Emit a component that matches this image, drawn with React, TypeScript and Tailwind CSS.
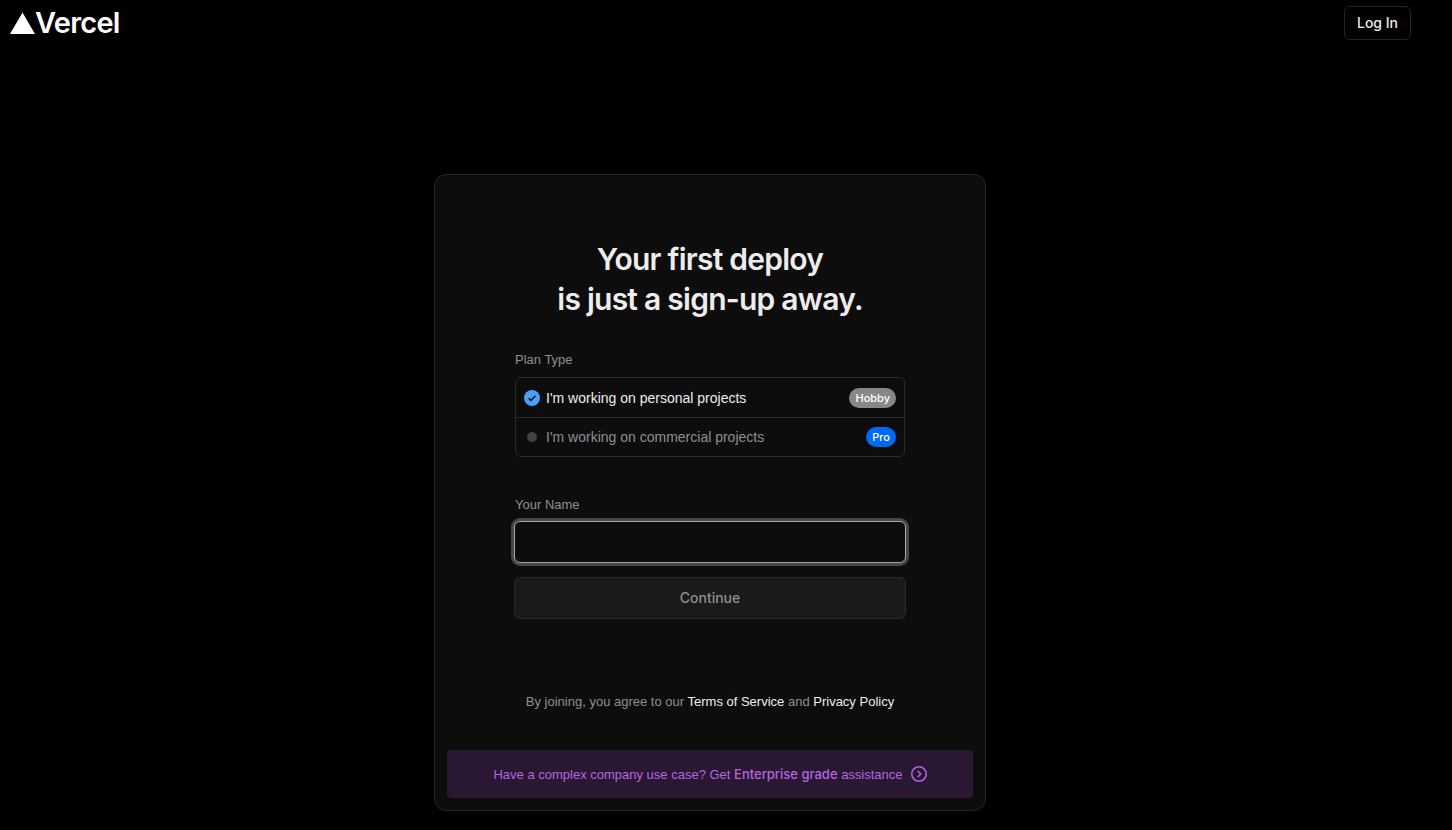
import { useState } from "react";

type PlanId = "hobby" | "pro";

interface Plan {
  id: PlanId;
  label: string;
  badge: string;
  badgeClass: string;
}

const PLANS: Plan[] = [
  { id: "hobby", label: "I'm working on personal projects", badge: "Hobby", badgeClass: "bg-[#878787]" },
  { id: "pro", label: "I'm working on commercial projects", badge: "Pro", badgeClass: "bg-[#006af5]" },
];

export default function App() {
  const [plan, setPlan] = useState<PlanId>("hobby");
  const [name, setName] = useState("");

  return (
    <div className="min-h-screen bg-black pr-8 pb-5 font-['Liberation_Sans',Arial,sans-serif] text-[#ededed]">
      <header className="flex items-start justify-between pt-1.5 pr-[9px] pl-2.5">
        <a href="/" className="flex h-[34px] items-center text-white">
          <svg className="h-[22px] w-[25px]" viewBox="0 0 25 22" fill="currentColor" aria-hidden="true">
            <path d="M12.5 0.5 25 22H0Z" />
          </svg>
          <span className="font-['Inter',sans-serif] text-[29px] leading-8 font-semibold tracking-tight">Vercel</span>
        </a>
        <button
          type="button"
          className="h-[34px] rounded-md border border-[#242424] px-3 font-['Inter',sans-serif] text-sm font-medium"
        >
          Log In
        </button>
      </header>

      <main className="mx-auto mt-[134px] max-w-[552px] rounded-xl border border-[#242424] bg-[#0d0d0d] p-3">
        <div className="mx-auto max-w-[392px] pt-[52px]">
          <h1 className="text-center font-['Inter',sans-serif] text-[30px] leading-10 font-semibold tracking-tight">
            Your first deploy
            <br />
            is just a sign-up away.
          </h1>

          <form onSubmit={(e) => e.preventDefault()}>
            <fieldset className="mt-[31px] px-px">
              <legend className="text-[13px] leading-5 text-[#8f8f8f]">Plan Type</legend>
              <div className="mt-[7px] divide-y divide-[#2a2a2a] rounded-md border border-[#2a2a2a]">
                {PLANS.map((p) => (
                  <PlanOption key={p.id} plan={p} checked={plan === p.id} onSelect={() => setPlan(p.id)} />
                ))}
              </div>
            </fieldset>

            <label htmlFor="name" className="mt-[38px] block px-px text-[13px] leading-5 text-[#8f8f8f]">
              Your Name
            </label>
            <input
              id="name"
              type="text"
              value={name}
              onChange={(e) => setName(e.target.value)}
              className="mt-[6px] block h-[42px] w-full rounded-md border border-[#a8a8a8] bg-[#0d0d0d] px-3 text-base ring-3 ring-[#474747] outline-none"
            />
            <button
              type="submit"
              disabled={!name.trim()}
              className="mt-[14px] h-[42px] w-full rounded-md border border-[#2a2a2a] bg-[#1a1a1a] font-['Inter',sans-serif] text-sm font-medium text-[#8f8f8f]"
            >
              Continue
            </button>
          </form>
        </div>

        <p className="mt-[73px] text-center text-[13px] leading-5 text-[#8f8f8f]">
          By joining, you agree to our{" "}
          <a href="/legal/terms" className="text-[#ededed]">Terms of Service</a> and{" "}
          <a href="/legal/privacy-policy" className="text-[#ededed]">Privacy Policy</a>
        </p>

        <a
          href="/contact/sales"
          className="mt-[38px] flex h-12 items-center justify-center gap-2 rounded bg-[#2a1731] text-[13px] leading-5 text-[#b366e0]"
        >
          <span>
            Have a complex company use case? Get <strong className="font-['Inter',sans-serif] font-medium">Enterprise grade</strong> assistance
          </span>
          <svg className="size-4" viewBox="0 0 16 16" fill="none" stroke="currentColor" strokeWidth="1.5" aria-hidden="true">
            <circle cx="8" cy="8" r="7.25" />
            <path d="m6.75 5 3 3-3 3" />
          </svg>
        </a>
      </main>
    </div>
  );
}

function PlanOption({
  plan,
  checked,
  onSelect,
}: {
  plan: Plan;
  checked: boolean;
  onSelect: () => void;
}) {
  return (
    <label
      className={`relative flex h-[38px] cursor-pointer items-center px-2 text-sm first:h-10 ${
        checked ? "text-[#ededed]" : "text-[#8f8f8f]"
      }`}
    >
      <input type="radio" name="plan" value={plan.id} checked={checked} onChange={onSelect} className="sr-only" />
      <svg className="mr-1.5 size-4" viewBox="0 0 16 16" fill="none" aria-hidden="true">
        {checked ? (
          <>
            <circle cx="8" cy="8" r="8" fill="#479ffa" />
            <path d="m4.7 8.3 2.2 2.2 4.6-4.8" stroke="#0d0d0d" strokeWidth="1.5" />
          </>
        ) : (
          <circle cx="8" cy="8" r="5" fill="#424242" />
        )}
      </svg>
      <span>{plan.label}</span>
      <span
        className={`ml-auto rounded-full px-1.5 font-['Inter',sans-serif] text-[11px] leading-5 font-medium text-white ${plan.badgeClass}`}
      >
        {plan.badge}
      </span>
    </label>
  );
}
